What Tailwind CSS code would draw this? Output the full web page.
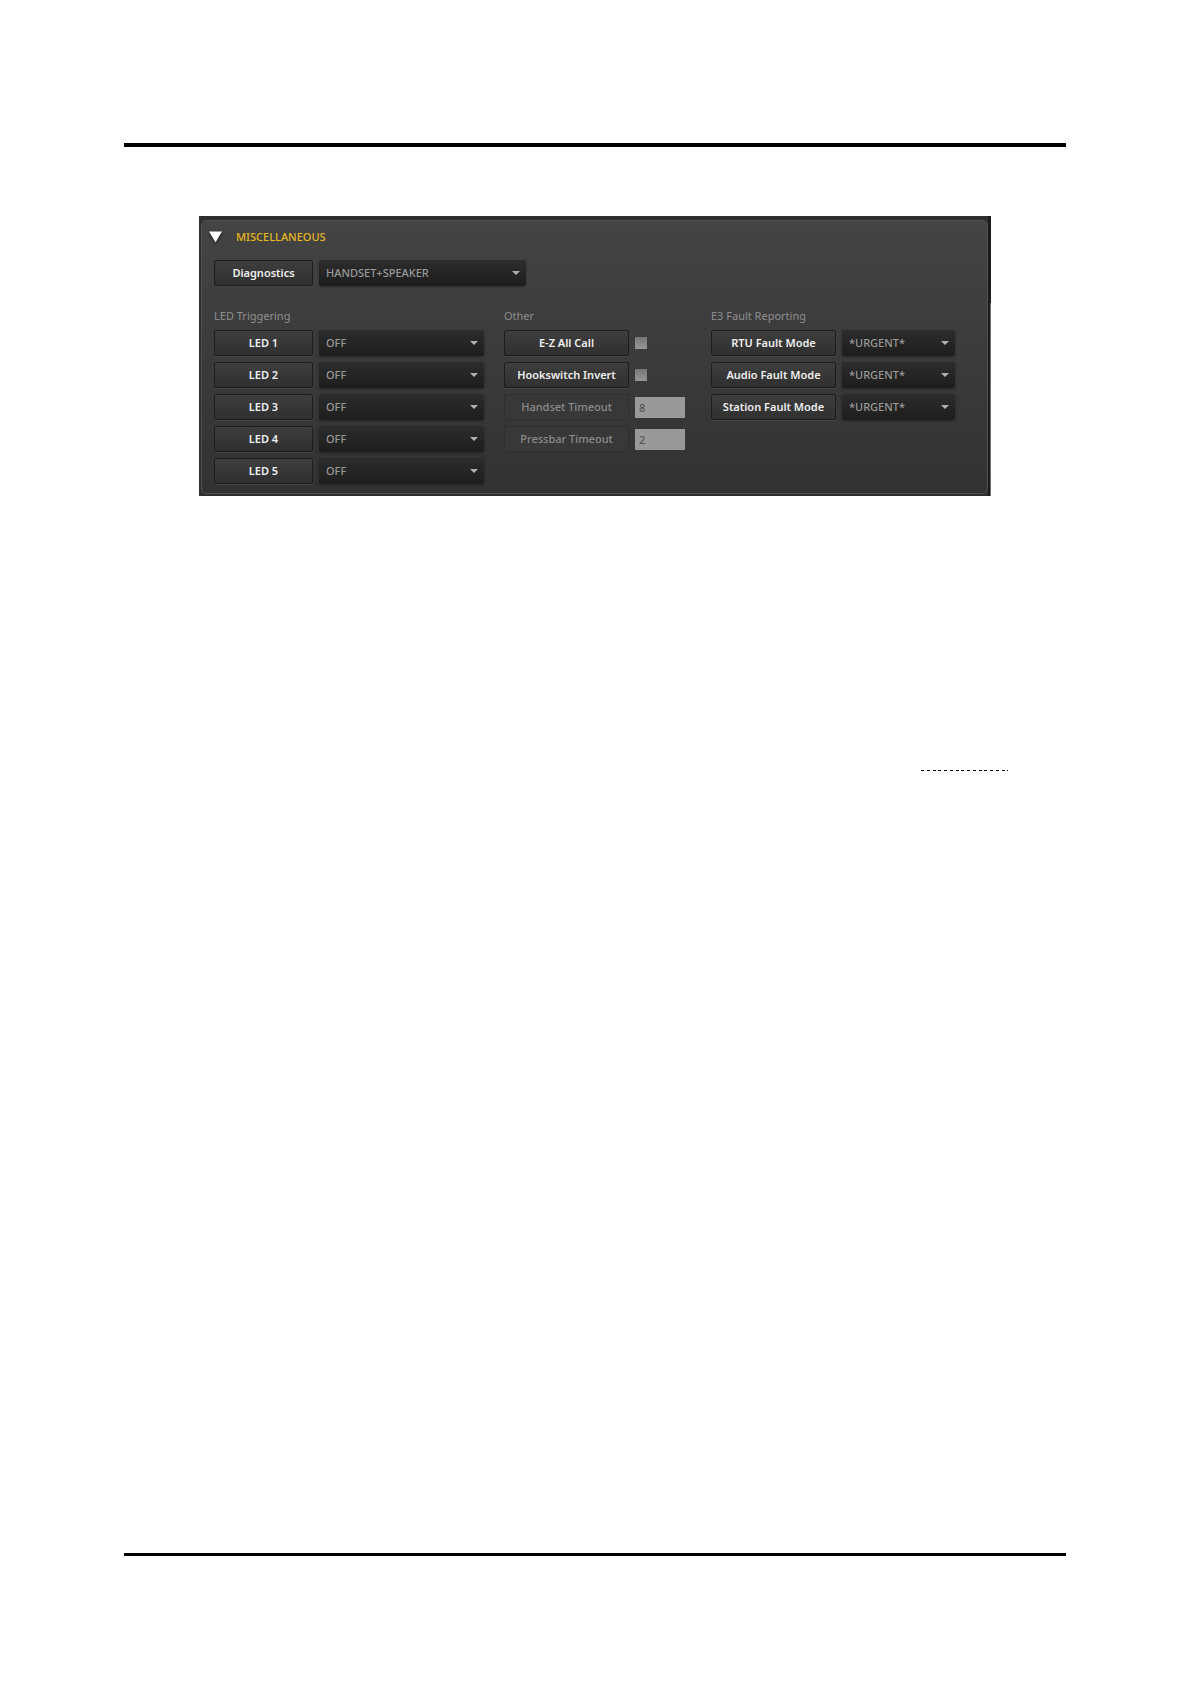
<!DOCTYPE html>
<html lang="en">
<head>
    <meta charset="UTF-8">
    <meta name="viewport" content="width=device-width, initial-scale=1.0">
    <title>Miscellaneous Settings</title>
    <script src="https://cdn.jsdelivr.net/npm/@tailwindcss/browser@4"></script>
</head>
<body class="bg-white font-['Noto_Sans',sans-serif]">
    <div class="min-h-screen flex flex-col px-[124px] pt-[143px] pb-32">
        <!-- Header rule -->
        <hr class="border-0 h-1 bg-black">

        <!-- Settings panel -->
        <main class="mt-[69px] mx-[75px] flex bg-[#2e2e30] text-[11px] leading-4 text-[#8f8f8f]">
            <section class="flex-1 mt-1 mb-[2px] ml-[2px] rounded-[5px] border border-[#505050] bg-linear-to-b from-[#444444] to-[#323232] pl-3 pt-2 pb-[9px]">
                <div class="flex items-center gap-[14px] -ml-[5px]">
                    <button type="button" aria-label="Collapse section" class="drop-shadow-[0_1px_1px_rgba(0,0,0,0.8)]">
                        <svg width="13" height="12" viewBox="0 0 13 12" class="block" aria-hidden="true"><path d="M0 0.5h13L6.5 11.5z" fill="#fff"/></svg>
                    </button>
                    <h1 class="font-medium text-[#e6b81e]">MISCELLANEOUS</h1>
                </div>

                <div class="mt-[15px] flex gap-[6px]" id="diagnostics"></div>

                <div class="mt-[22px] flex">
                    <div class="mr-5">
                        <h2>LED Triggering</h2>
                        <div id="ledRows" class="mt-[6px] flex flex-col gap-[6px]"></div>
                    </div>
                    <div class="mr-[26px]">
                        <h2>Other</h2>
                        <div id="otherRows" class="mt-[6px] flex flex-col gap-[6px]"></div>
                    </div>
                    <div>
                        <h2>E3 Fault Reporting</h2>
                        <div id="faultRows" class="mt-[6px] flex flex-col gap-[6px]"></div>
                    </div>
                </div>
            </section>
            <!-- Right edge -->
            <div class="w-[3px] flex flex-col">
                <div class="h-[87px] bg-[#1c1c1e]"></div>
                <div class="flex-1 border-l-2 border-[#1c1c1c] bg-[#707070]"></div>
            </div>
        </main>

        <!-- Dashed underline -->
        <svg width="87" height="1" class="mt-[274px] mr-[58px] self-end" shape-rendering="crispEdges" aria-hidden="true"><path d="M0 0.5h87" stroke="#000" stroke-dasharray="3 2.75"/></svg>

        <!-- Footer rule -->
        <hr class="mt-auto border-0 h-[3px] bg-black">
    </div>

    <script>
        const labelBase = 'h-[26px] flex items-center justify-center rounded-[2px] border';
        const labelOn = 'border-[#1d1d1d] bg-linear-to-b from-[#3e3e3e] to-[#303030] font-semibold text-[#efefef] shadow-[0_1px_0_#444444]';
        const labelOff = 'border-[#2f2f2f] bg-[#383838] font-medium text-[#8c8c8c]';

        function label(id, text, width, disabled) {
            return `<label for="${id}" class="${labelBase} ${width} ${disabled ? labelOff : labelOn}">${text}</label>`;
        }

        function select(id, value, width) {
            return `
                <div class="relative ${width}">
                    <select id="${id}" class="appearance-none block w-full h-[26px] pl-[7px] rounded-[2px] bg-linear-to-b from-[#2d2d2d] to-[#1d1d1d] font-medium text-[#999999] shadow-[0_1px_3px_rgba(0,0,0,0.35)]">
                        <option>${value}</option>
                    </select>
                    <svg width="8" height="4" viewBox="0 0 8 4" class="absolute right-[6px] top-[11px] pointer-events-none" aria-hidden="true"><path d="M0 0h8L4 4z" fill="#b0b0b0"/></svg>
                </div>`;
        }

        function row(content) {
            return `<div class="flex items-center gap-[6px]">${content}</div>`;
        }

        document.getElementById('diagnostics').innerHTML =
            label('diag', 'Diagnostics', 'w-[99px]') + select('diag', 'HANDSET+SPEAKER', 'w-[207px]');

        document.getElementById('ledRows').innerHTML = [1, 2, 3, 4, 5]
            .map(n => row(label('led' + n, 'LED ' + n, 'w-[99px]') + select('led' + n, 'OFF', 'w-[165px]')))
            .join('');

        const checks = [['allCall', 'E-Z All Call'], ['hookswitch', 'Hookswitch Invert']];
        const timeouts = [['handset', 'Handset Timeout', 8], ['pressbar', 'Pressbar Timeout', 2]];

        document.getElementById('otherRows').innerHTML =
            checks.map(([id, text]) => row(label(id, text, 'w-[125px]') +
                `<input type="checkbox" id="${id}" class="appearance-none size-3 bg-linear-to-b from-[#777777] to-[#969696]">`)).join('') +
            timeouts.map(([id, text, value]) => row(label(id, text, 'w-[125px]', true) +
                `<input type="text" id="${id}" value="${value}" disabled class="w-[50px] h-[21px] px-1 bg-[#999999] font-medium text-[#555555]">`)).join('');

        const faults = [['rtu', 'RTU Fault Mode'], ['audio', 'Audio Fault Mode'], ['station', 'Station Fault Mode']];

        document.getElementById('faultRows').innerHTML = faults
            .map(([id, text]) => row(label(id, text, 'w-[125px]') + select(id, '*URGENT*', 'w-[113px]')))
            .join('');
    </script>
</body>
</html>
